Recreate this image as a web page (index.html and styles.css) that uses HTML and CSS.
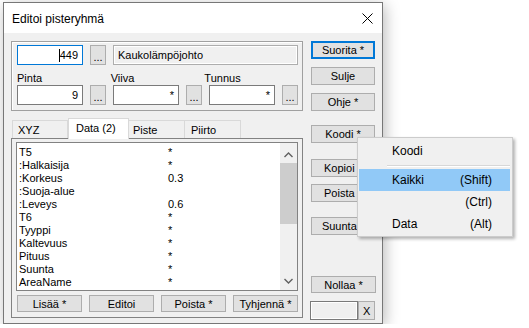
FILE: index.html
```html
<!DOCTYPE html>
<html lang="fi">
<head>
<meta charset="UTF-8" />
<title>Editoi pisteryhmä</title>
<link rel="stylesheet" href="styles.css">
</head>
<body>

<div class="window">
  <div class="titlebar">
    <span class="title">Editoi pisteryhmä</span>
    <svg class="close" width="11" height="11" viewBox="0 0 11 11">
      <path d="M0.5 0.5 L10.5 10.5 M10.5 0.5 L0.5 10.5" stroke="#000" stroke-width="1" fill="none"/>
    </svg>
  </div>

  <div class="client">
    <div class="left">
      <div class="group">
        <div class="row">
          <div class="field focus"><span class="caret"></span>449</div>
          <button class="dots">...</button>
          <div class="field readonly">Kaukolämpöjohto</div>
        </div>
        <div class="labels">
          <span>Pinta</span>
          <span>Viiva</span>
          <span>Tunnus</span>
        </div>
        <div class="row">
          <div class="field">9</div>
          <button class="dots">...</button>
          <div class="field">*</div>
          <button class="dots">...</button>
          <div class="field">*</div>
          <button class="dots">...</button>
        </div>
      </div>

      <div class="tabs">
        <div class="tab tab-xyz">XYZ</div>
        <div class="tab tab-data active">Data (2)</div>
        <div class="tab tab-piste">Piste</div>
        <div class="tab tab-piirto">Piirto</div>
      </div>

      <div class="panel">
        <div class="list">
          <div class="items">
            <span>T5</span><span>*</span>
            <span>:Halkaisija</span><span>*</span>
            <span>:Korkeus</span><span>0.3</span>
            <span>:Suoja-alue</span><span></span>
            <span>:Leveys</span><span>0.6</span>
            <span>T6</span><span>*</span>
            <span>Tyyppi</span><span>*</span>
            <span>Kaltevuus</span><span>*</span>
            <span>Pituus</span><span>*</span>
            <span>Suunta</span><span>*</span>
            <span>AreaName</span><span>*</span>
          </div>
          <div class="scrollbar">
            <div class="arrow up">
              <svg width="9" height="6" viewBox="0 0 9 6"><path d="M0.5 5 L4.5 1 L8.5 5" stroke="#606060" stroke-width="1.4" fill="none"/></svg>
            </div>
            <div class="thumb"></div>
            <div class="arrow down">
              <svg width="9" height="6" viewBox="0 0 9 6"><path d="M0.5 1 L4.5 5 L8.5 1" stroke="#606060" stroke-width="1.4" fill="none"/></svg>
            </div>
          </div>
        </div>
        <div class="actions">
          <button>Lisää *</button>
          <button>Editoi</button>
          <button>Poista *</button>
          <button>Tyhjennä *</button>
        </div>
      </div>
    </div>

    <div class="right">
      <button class="default">Suorita *</button>
      <button class="mt8">Sulje</button>
      <button class="mt8">Ohje *</button>
      <button class="mt14">Koodi *</button>
      <button class="mt16">Kopioi *</button>
      <button class="mt7">Poista *</button>
      <button class="mt15">Suunta *</button>
      <button class="nollaa">Nollaa *</button>
      <div class="filter">
        <div class="filter-box"></div>
        <button class="filter-x">X</button>
      </div>
    </div>
  </div>

  <!-- Koodi-valikko auki -->
  <div class="menu">
    <div class="item"><span>Koodi</span></div>
    <div class="separator"></div>
    <div class="item hover"><span>Kaikki</span><span>(Shift)</span></div>
    <div class="item"><span></span><span>(Ctrl)</span></div>
    <div class="item"><span>Data</span><span>(Alt)</span></div>
  </div>
</div>

</body>
</html>
```

FILE: styles.css
```css
body {
  margin: 0;
  background: #fff;
  font-family: "Liberation Sans", Arial, sans-serif;
  font-size: 11px;
  color: #000;
}
button {
  font-family: inherit;
  font-size: 11px;
  color: #000;
  background: #e1e1e1;
  border: 1px solid #adadad;
  padding: 0;
  margin: 0;
  box-sizing: border-box;
}
.window {
  position: relative;
  margin: 2px 0 0 3px;
  width: 380px;
  height: 322px;
  box-sizing: border-box;
  border: 1px solid #777;
  box-shadow: 2px 3px 14px rgb(0 0 0 / 0.28);
}
.titlebar {
  height: 30px;
  background: #fff;
  display: flex;
  justify-content: space-between;
  align-items: center;
  padding: 0 9px 0 8px;
}
.title {
  font-size: 12px;
  margin-top: 1px;
}
.close {
  margin-top: 1px;
}
.client {
  height: 290px;
  box-sizing: border-box;
  background: #f0f0f0;
  padding: 8px 0 0 7px;
  display: flex;
  gap: 8px;
}
.left {
  width: 292px;
}
/* Yläosan ryhmä */
.group {
  height: 70px;
  box-sizing: border-box;
  border: 1px solid #a0a0a0;
  box-shadow: inset 1px 1px 0 #fff;
  padding: 3px 4px 0 5px;
}
.row {
  display: flex;
  gap: 7px;
  height: 20px;
}
.field {
  width: 66px;
  height: 20px;
  box-sizing: border-box;
  border: 1px solid #7a7a7a;
  background: #fff;
  text-align: right;
  padding-right: 4px;
  line-height: 18px;
}
.field.focus {
  border-color: #0078d7;
}
.caret {
  display: inline-block;
  width: 1px;
  height: 13px;
  background: #000;
  vertical-align: -3px;
}
.field.readonly {
  flex: 1;
  text-align: left;
  padding: 0 0 0 4px;
  background: #f0f0f0;
  border-color: #adadad;
  box-shadow: inset 0 0 0 1px #fff;
}
.dots {
  width: 16px;
  height: 20px;
  line-height: 22px;
}
.labels {
  display: flex;
  height: 20px;
}
.labels span {
  width: 96px;
  padding-top: 7px;
  line-height: 13px;
}
/* Välilehdet */
.tabs {
  margin-top: 7px;
  height: 20px;
  display: flex;
  align-items: flex-end;
  padding-left: 1px;
  position: relative;
  z-index: 1;
}
.tab {
  height: 18px;
  box-sizing: border-box;
  border: 1px solid #d9d9d9;
  border-bottom: none;
  background: #f0f0f0;
  line-height: 19px;
}
.tab.active {
  height: 21px;
  margin-bottom: -1px;
  background: #fff;
  line-height: 18px;
}
.tab-xyz { width: 56px; padding-left: 5px; }
.tab-data { width: 61px; padding-left: 7px; }
.tab-piste { width: 56px; padding-left: 4px; border-left: none; }
.tab-piirto { width: 56px; padding-left: 6px; border-left: none; }
.panel {
  height: 180px;
  box-sizing: border-box;
  border: 1px solid #828282;
  background: #f0f0f0;
  padding: 3px 4px 0 4px;
}
.list {
  height: 149px;
  box-sizing: border-box;
  border: 1px solid #828282;
  background: #fff;
  display: flex;
}
.items {
  flex: 1;
  padding: 3px 0 0 2px;
  display: grid;
  grid-template-columns: 149px 1fr;
  grid-auto-rows: 13px;
  line-height: 13px;
}
.scrollbar {
  width: 17px;
  background: #f0f0f0;
  display: flex;
  flex-direction: column;
}
.arrow {
  height: 20px;
  display: flex;
  justify-content: center;
}
.arrow.up {
  padding-top: 9px;
  box-sizing: border-box;
}
.arrow.down {
  margin-top: auto;
  padding-top: 8px;
  box-sizing: border-box;
}
.thumb {
  height: 61px;
  background: #cdcdcd;
}
.actions {
  display: flex;
  gap: 7px;
  margin: 4px 0 0 1px;
}
.actions button {
  width: 65px;
  height: 17px;
}
/* Oikean reunan painikkeet */
.right {
  width: 64px;
  display: flex;
  flex-direction: column;
}
.right button {
  height: 18px;
}
.right button.default {
  border: 2px solid #0078d7;
}
.mt7 { margin-top: 7px; }
.mt8 { margin-top: 8px; }
.mt14 { margin-top: 14px; }
.mt15 { margin-top: 15px; }
.mt16 { margin-top: 16px; }
.right button.nollaa {
  margin-top: 41px;
  height: 17px;
  width: 65px;
}
.filter {
  display: flex;
  margin: 8px 0 0 -1px;
  height: 19px;
}
.filter-box {
  width: 49px;
  box-sizing: border-box;
  border: 1px solid #7a7a7a;
  box-shadow: inset 0 0 0 1px #fff;
  background: #f0f0f0;
}
.right button.filter-x {
  width: 17px;
  height: 19px;
}
/* Ponnahdusvalikko */
.menu {
  position: absolute;
  left: 353px;
  top: 134px;
  width: 156px;
  height: 100px;
  box-sizing: border-box;
  border: 1px solid #ccc;
  background: #f0f0f0;
  padding: 2px 2px 2px 1px;
  font-size: 12px;
  box-shadow: 2px 2px 3px rgb(0 0 0 / 0.3);
  z-index: 5;
}
.item {
  height: 22px;
  line-height: 22px;
  display: flex;
  justify-content: space-between;
  padding: 0 18px 0 33px;
}
.item.hover {
  background: #91c9f7;
}
.separator {
  height: 0;
  margin: 3px 0 2px 28px;
  border-top: 1px solid #d7d7d7;
  border-bottom: 1px solid #fff;
}
```
